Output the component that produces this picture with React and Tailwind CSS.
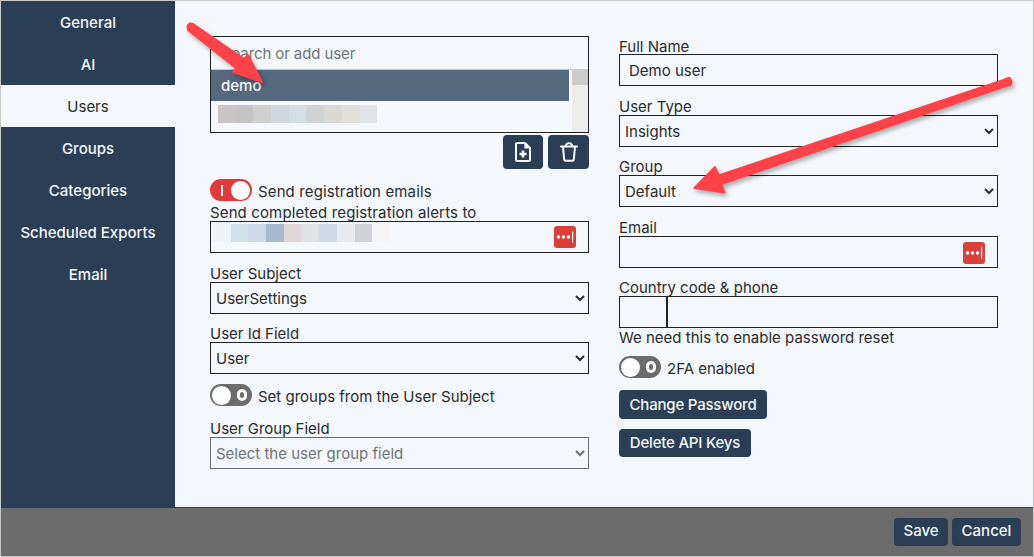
import React from "react";

const NAV = ["General", "AI", "Users", "Groups", "Categories", "Scheduled Exports", "Email"];

const BLUR_ONE = ["bg-[#c9c5c6]", "bg-[#c5c2c3]", "bg-[#cfcfcd]", "bg-[#d0d7de]", "bg-[#d3dfe5]", "bg-[#cfd2d3]", "bg-[#d9d8d3]", "bg-[#e0dfd9]", "bg-[#e1e3e8]"];
const BLUR_TWO = ["bg-[#eef3f7]", "bg-[#cfe1e9]", "bg-[#cdd9e6]", "bg-[#a9bacd]", "bg-[#dfd6d8]", "bg-[#e0e2e5]", "bg-[#cfdae5]", "bg-[#e7e9ec]", "bg-[#d1d2d7]", "bg-[#f4f5f4]"];

const Field = ({ label, children }) => (
  <div>
    <div className="h-[17px] leading-[18px] whitespace-nowrap">{label}</div>
    {children}
  </div>
);

const boxClass = "block w-full h-[32px] border border-[#222] bg-[#f4f7fb] text-[#2b2b2b] outline-none";

const Select = ({ value, muted }) => (
  <select
    defaultValue={value}
    className={muted ? "block w-full h-[32px] border border-[#6c6c6c] bg-[#f4f7fb] text-[#6f747a] px-[1px] outline-none" : boxClass + " px-[1px]"}
  >
    <option>{value}</option>
  </select>
);

const KeyIcon = ({ className }) => (
  <span className={"absolute right-[12px] w-[22px] h-[22px] rounded-[3px] bg-[#db3f3b] flex items-center justify-center " + className}>
    <svg width="18" height="12" viewBox="0 0 18 12" fill="#fff">
      <circle cx="2.5" cy="6" r="1.7" />
      <circle cx="7.5" cy="6" r="1.7" />
      <circle cx="12.5" cy="6" r="1.7" />
      <rect x="16" y="0.5" width="1.2" height="11" />
    </svg>
  </span>
);

const Toggle = ({ on, label }) => (
  <div className="flex items-center gap-[6px] h-[22px]">
    {on ? (
      <span className="w-[42px] h-[22px] rounded-full bg-[#e03a3a] flex items-center justify-between pl-[11px] pr-[2px]">
        <span className="w-[2px] h-[11px] bg-white" />
        <span className="w-[19px] h-[19px] rounded-full bg-white" />
      </span>
    ) : (
      <span className="w-[42px] h-[22px] rounded-full bg-[#6c6c6c] flex items-center justify-between pl-[2px] pr-[5px]">
        <span className="w-[19px] h-[19px] rounded-full bg-white" />
        <span className="w-[10px] h-[12px] rounded-full border-[3px] border-white bg-[#6c6c6c]" />
      </span>
    )}
    <span className={"whitespace-nowrap pt-[5px] " + (on ? "tracking-[0.13px]" : "")}>{label}</span>
  </div>
);

const Button = ({ children, className = "" }) => (
  <button className={"rounded-[4px] bg-[#2a3f56] text-[#f4f7fb] font-medium whitespace-nowrap " + className}>{children}</button>
);

export default function App() {
  return (
    <div className="relative w-[1034px] h-[557px] overflow-hidden border border-[#c8c8c8] bg-[#f4f7fb] text-[#2b2b2b] text-[15px] flex flex-col font-['Inter','Liberation_Sans',sans-serif]">
      <div className="flex flex-1 min-h-0">
        <nav className="w-[174px] bg-[#2a3f56] text-[#f4f7fb] font-medium shrink-0">
          {NAV.map((item) => (
            <div
              key={item}
              className={"h-[42px] pt-[2px] flex items-center justify-center whitespace-nowrap " + (item === "Users" ? "bg-[#f4f7fb] text-[#2b2b2b] font-normal" : "")}
            >
              {item}
            </div>
          ))}
        </nav>

        <main className="flex-1 flex gap-[30px] pl-[35px] pr-[35px] pt-[35px]">
          <div className="w-[379px]">
            <div className="h-[97px] border border-[#222] flex flex-col">
              <div className="h-[32px] pt-[2px] flex items-center pl-[11px] text-[#6f747a] tracking-[-0.1px]">Search or add user</div>
              <div className="flex flex-1 min-h-0">
                <div className="flex-1 border-t border-[#c8c8c8]">
                  <div className="h-[31px] pt-[2px] mr-[3px] flex items-center pl-[10px] bg-[#54687e] text-[#f4f7fb] font-medium">demo</div>
                  <div className="flex pl-[7px] pt-[4px]">
                    {BLUR_ONE.map((c) => (
                      <span key={c} className={"w-[17.7px] h-[18px] " + c} />
                    ))}
                  </div>
                </div>
                <div className="w-[16px] bg-[#ececec]">
                  <div className="h-[16px] bg-[#cbcbcb]" />
                </div>
              </div>
            </div>

            <div className="flex justify-end gap-[5px] mt-[2px]">
              <Button className="w-[40px] h-[34px] flex items-center justify-center">
                <svg width="16" height="20" viewBox="0 0 16 20" fill="none" stroke="#f4f7fb" strokeWidth="2" strokeLinejoin="round">
                  <path d="M1 2a1 1 0 0 1 1-1h8l5 5v12a1 1 0 0 1-1 1H2a1 1 0 0 1-1-1z" />
                  <path d="M10 1v5h5z" fill="#f4f7fb" strokeWidth="1.2" />
                  <path d="M8 8.5v7M4.5 12h7" strokeWidth="2.6" />
                </svg>
              </Button>
              <Button className="w-[41px] h-[34px] flex items-center justify-center">
                <svg width="18" height="20" viewBox="0 0 18 20" fill="none" stroke="#f4f7fb" strokeWidth="2" strokeLinejoin="round" strokeLinecap="round">
                  <path d="M1 4.5h16" />
                  <path d="M5.5 4.5C6 2 7 1.2 9 1.2s3 .8 3.5 3.3" strokeWidth="1.8" />
                  <path d="M3 5l1.2 12.5a1.5 1.5 0 0 0 1.5 1.3h6.6a1.5 1.5 0 0 0 1.5-1.3L15 5" />
                </svg>
              </Button>
            </div>

            <div className="mt-[10px]">
              <Toggle on label="Send registration emails" />
            </div>
            <div className="h-[20px] leading-[23px] whitespace-nowrap tracking-[0.13px]">Send completed registration alerts to</div>
            <div className="relative h-[32px] border border-[#222]">
              <div className="flex pl-[2px] pt-[2px]">
                {BLUR_TWO.map((c) => (
                  <span key={c} className={"w-[17.7px] h-[18px] " + c} />
                ))}
              </div>
              <KeyIcon className="top-[4px]" />
            </div>

            <div className="mt-[12px]">
              <Field label="User Subject">
                <Select value="UserSettings" />
              </Field>
            </div>
            <div className="mt-[11px]">
              <Field label="User Id Field">
                <Select value="User" />
              </Field>
            </div>
            <div className="mt-[10px]">
              <Toggle label="Set groups from the User Subject" />
            </div>
            <div className="mt-[14px]">
              <Field label="User Group Field">
                <Select value="Select the user group field" muted />
              </Field>
            </div>
          </div>

          <div className="w-[379px] -mt-[1px]">
            <div className="mt-[3px]">
              <Field label="Full Name">
                <div className={boxClass + " flex items-center pl-[9px] pt-[2px] -mt-[1px]"}>Demo user</div>
              </Field>
            </div>
            <div className="mt-[12px]">
              <Field label="User Type">
                <Select value="Insights" />
              </Field>
            </div>
            <div className="mt-[11px]">
              <Field label="Group">
                <Select value="Default" />
              </Field>
            </div>
            <div className="mt-[12px]">
              <Field label="Email">
                <div className={"relative " + boxClass}>
                  <KeyIcon className="top-[5px]" />
                </div>
              </Field>
            </div>
            <div className="mt-[11px]">
              <Field label="Country code & phone">
                <div className="flex h-[32px] border border-[#222]">
                  <div className="w-[48px] border-r-2 border-[#222]" />
                </div>
              </Field>
            </div>
            <div className="h-[20px] leading-[20px] whitespace-nowrap">We need this to enable password reset</div>
            <div className="mt-[8px]">
              <Toggle label="2FA enabled" />
            </div>
            <Button className="block w-[148px] h-[29px] mt-[12px] pt-[1px] tracking-[-0.2px]">Change Password</Button>
            <Button className="block w-[132px] h-[28px] mt-[10px] pt-[1px] tracking-[-0.2px]">Delete API Keys</Button>
          </div>
        </main>
      </div>

      <footer className="h-[49px] shrink-0 bg-[#6c6c6c] border-t border-[#3c3c3c] flex items-center justify-end gap-[4px] pr-[12px] pb-[1px]">
        <Button className="w-[54px] h-[28px]">Save</Button>
        <Button className="w-[69px] h-[28px]">Cancel</Button>
      </footer>

      <svg className="absolute left-[-1px] top-[-1px] pointer-events-none drop-shadow-[2px_3px_2px_rgba(0,0,0,0.3)]" width="1034" height="557" viewBox="0 0 1034 557">
        <circle cx="191" cy="27" r="4.5" fill="#ff4248" />
        <path d="M193 24 L244 59 L248 55 L262 82 L233 72 L236 68 L188 30 Z" fill="#ff4248" stroke="#ff4248" strokeWidth="2" strokeLinejoin="round" />
        <circle cx="1008" cy="82" r="4.5" fill="#ff4248" />
        <path d="M1009.6 78 L718.6 175.4 L715 167 L694.5 188 L724.5 192.5 L721.4 184 L1007 85.5 Z" fill="#ff4248" stroke="#ff4248" strokeWidth="2" strokeLinejoin="round" />
      </svg>
    </div>
  );
}
